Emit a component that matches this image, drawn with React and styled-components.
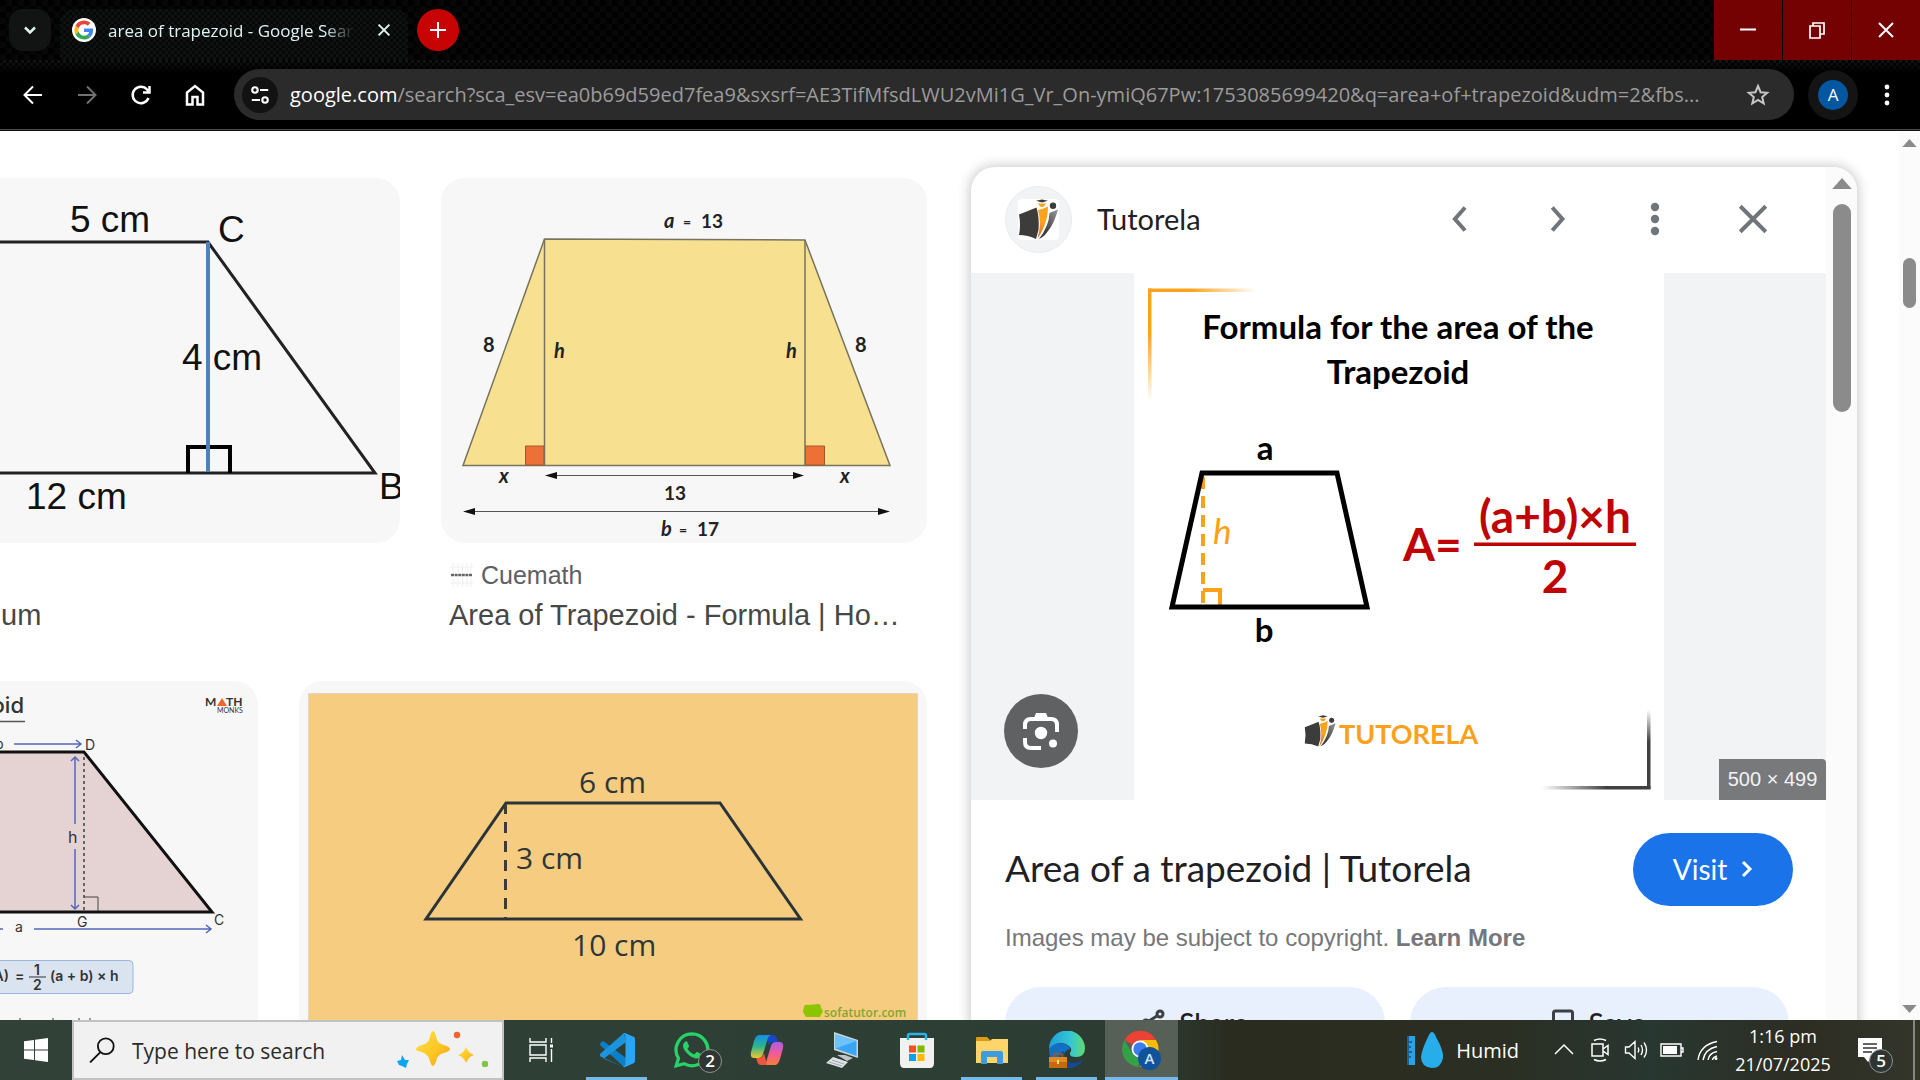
import React from 'react';
import styled, { createGlobalStyle } from 'styled-components';

const ui = '"Open Sans", "Noto Sans", sans-serif';
const arial = '"Liberation Sans", Arial, sans-serif';
const product = 'Lato, "Open Sans", sans-serif';

const Global = createGlobalStyle`
  * { box-sizing: border-box; }
  html, body { margin: 0; height: 100%; overflow: hidden; }
  #root { height: 100%; }
  button, input { font: inherit; color: inherit; border: 0; background: none; padding: 0; margin: 0; outline: 0; }
  a { color: inherit; text-decoration: none; }
  svg { display: block; flex: none; }
`;

const Screen = styled.div`
  height: 100vh;
  display: flex;
  flex-direction: column;
  background: #fff;
  font-family: ${ui};
`;

/* ---------- browser frame ---------- */
const Frame = styled.header`
  flex: none;
  color: #fff;
  background: #000;
  border-bottom: 1px solid #111;
`;
const TabStrip = styled.div`
  height: 60px;
  display: flex;
  align-items: flex-start;
  padding-left: 9px;
  background: repeating-conic-gradient(#070707 0 25%, #010101 0 50%) 0 0 / 12px 12px;
`;
const TabSearch = styled.button`
  width: 42px;
  height: 42px;
  margin: 9px 9px 0 0;
  display: grid;
  place-items: center;
  border-radius: 14px;
  background: #121313;
`;
const Tab = styled.div`
  width: 348px;
  height: 51px;
  margin-top: 9px;
  padding: 0 12px 10px 12px;
  display: flex;
  align-items: center;
  border-radius: 14px 14px 0 0;
  background: repeating-conic-gradient(#101212 0 25%, #060707 0 50%) 0 0 / 6px 6px;
`;
const TabTitle = styled.span`
  width: 252px;
  margin: 2px 18px 0 12px;
  font-size: 17px;
  line-height: 24px;
  white-space: nowrap;
  overflow: hidden;
  color: #dff3f1;
  mask-image: linear-gradient(90deg, #000 88%, transparent);
`;
const IconButton = styled.button`
  width: ${(p) => p.$size || 24}px;
  height: ${(p) => p.$size || 24}px;
  display: grid;
  place-items: center;
  flex: none;
`;
const NewTab = styled.button`
  width: 42px;
  height: 42px;
  margin: 9px auto 0 9px;
  display: grid;
  place-items: center;
  border-radius: 50%;
  background: #c80303;
`;
const WindowButtons = styled.div`
  display: flex;
  gap: 1px;
`;
const WindowButton = styled.button`
  width: 68px;
  height: 60px;
  display: grid;
  place-items: center;
  background: #740202;
`;
const Toolbar = styled.div`
  height: 70px;
  padding: 9px 20px 9px 6px;
  display: flex;
  align-items: center;
  border-bottom: 1px solid #4a4a4a;
  background:
    linear-gradient(180deg, transparent, #000 13px),
    repeating-conic-gradient(#151515 0 25%, #020202 0 50%) 0 0 / 6px 6px;
`;
const Omnibox = styled.div`
  flex: 1;
  min-width: 0;
  height: 51px;
  margin: 0 14px 0 12px;
  padding: 0 22px 0 8px;
  display: flex;
  align-items: center;
  border-radius: 26px;
  background: #2b2b2b;
  font-size: 20px;
`;
const SiteInfo = styled.button`
  width: 36px;
  height: 36px;
  margin-right: 12px;
  display: grid;
  place-items: center;
  border-radius: 50%;
  background: #121212;
  flex: none;
`;
const Host = styled.label`
  flex: none;
`;
const UrlInput = styled.input`
  flex: 1;
  min-width: 0;
  height: 36px;
  color: #9b9b9b !important;
  text-overflow: clip;
`;
const Profile = styled.button`
  width: 50px;
  height: 50px;
  margin-right: 16px;
  display: grid;
  place-items: center;
  border-radius: 50%;
  background: #141414;
`;
const Initial = styled.span`
  width: 30px;
  height: 30px;
  border-radius: 50%;
  background: #0357a0;
  font-size: 17px;
  line-height: 30px;
  text-align: center;
`;
const NavGroup = styled.nav`
  display: flex;
`;

/* ---------- page ---------- */
const Page = styled.main`
  flex: 1;
  min-height: 0;
  display: flex;
  overflow: hidden;
  background: #fff;
`;
const Results = styled.section`
  flex: 1;
  min-width: 0;
  padding-top: 47px;
  display: flex;
  flex-direction: column;
  gap: 48px;
`;
const Row = styled.div`
  display: flex;
  gap: 41px;
`;
const Card = styled.article`
  ${(p) => (p.$grow ? 'flex: 1;' : `width: ${p.$width}px;`)}
  min-width: 0;
`;
const Thumb = styled.a`
  display: block;
  height: 365px;
  overflow: hidden;
  background: #f7f7f7;
  border-radius: ${(p) => (p.$cut ? '0 24px 24px 0' : '24px')};
`;
const Source = styled.div`
  height: 28px;
  margin-top: 18px;
  padding-left: 9px;
  display: flex;
  align-items: center;
  gap: 8px;
  font: 25px/28px ${arial};
  color: #5e6063;
`;
const CardTitle = styled.h3`
  height: 36px;
  margin: 8px 0 0;
  padding: 0 ${(p) => (p.$cut ? 1 : 8)}px;
  font: 400 29px/36px ${arial};
  color: #474747;
  white-space: nowrap;
`;

const Panel = styled.aside`
  width: 886px;
  margin: 36px 42px 0 44px;
  display: flex;
  align-items: flex-start;
  height: 1000px;
  overflow: hidden;
  border-radius: 24px 24px 0 0;
  background: #fff;
  box-shadow: 0 0 12px 2px rgba(0, 0, 0, 0.2);
`;
const PanelBody = styled.div`
  flex: 1;
  min-width: 0;
`;
const PanelHead = styled.div`
  height: 106px;
  padding: 0 49px 2px 34px;
  display: flex;
  align-items: center;
  gap: 49px;
`;
const Brand = styled.a`
  flex: 1;
  display: flex;
  align-items: center;
  gap: 25px;
  font: 29px/36px ${product};
  color: #1f2024;
`;
const BrandMark = styled.span`
  width: 67px;
  height: 67px;
  display: grid;
  place-items: center;
  border: 1px solid #e8eaed;
  border-radius: 50%;
  background: #f1f3f4;
`;
const Stage = styled.div`
  position: relative;
  height: 527px;
  display: flex;
  justify-content: center;
  background: #f1f3f4;
`;
const LensButton = styled.button`
  position: absolute;
  left: 33px;
  bottom: 32px;
  width: 74px;
  height: 74px;
  display: grid;
  place-items: center;
  border-radius: 50%;
  background: #606163;
`;
const SizeBadge = styled.span`
  position: absolute;
  right: 0;
  bottom: 0;
  width: 107px;
  font: 20px/41px ${arial};
  text-align: center;
  color: #f1f3f4;
  background: #78797b;
  border-top-right-radius: 4px;
`;
const TitleRow = styled.div`
  margin-top: 33px;
  padding: 0 33px 0 34px;
  display: flex;
  align-items: center;
  justify-content: space-between;
`;
const PanelTitle = styled.h2`
  margin: 0;
  padding-bottom: 4px;
  font: 400 37px/48px ${product};
  color: #1f2024;
`;
const Visit = styled.a`
  width: 160px;
  height: 73px;
  padding-bottom: 2px;
  display: flex;
  align-items: center;
  justify-content: center;
  gap: 14px;
  border-radius: 37px;
  background: #1a73e8;
  color: #fff;
  font: 28px/36px ${product};
`;
const Notice = styled.p`
  margin: 18px 0 0;
  padding-left: 34px;
  font: 24px/28px ${arial};
  color: #75777b;
`;
const Actions = styled.div`
  margin-top: 35px;
  padding: 0 37px 0 34px;
  display: flex;
  gap: 25px;
`;
const Action = styled.button`
  flex: 1;
  height: 72px;
  display: flex;
  align-items: center;
  justify-content: center;
  gap: 14px;
  border-radius: 36px;
  background: #e8effd;
  color: #1f2024;
  font: 500 28px/36px ${product};
`;
const Track = styled.div`
  width: ${(p) => p.$width}px;
  height: 100%;
  padding: ${(p) => p.$pad};
  display: flex;
  flex-direction: column;
  align-items: center;
  background: #fbfbfb;
  flex: none;
`;
const ScrollThumb = styled.div`
  width: ${(p) => p.$width}px;
  height: ${(p) => p.$height}px;
  margin: ${(p) => p.$gap}px 0 auto;
  border-radius: 9px;
  background: #8b8b8b;
`;

/* ---------- taskbar ---------- */
const Taskbar = styled.footer`
  flex: none;
  height: 60px;
  display: flex;
  color: #fff;
  background: linear-gradient(90deg, #314137 0, #2d3e35 50%, #2b3b31 60%, #2b2c20 64%, #2b2e22 78%, #283731 86%, #2d2d22 94%, #34362b 100%);
`;
const TaskButton = styled.button`
  position: relative;
  width: ${(p) => p.$width || 75}px;
  height: 60px;
  display: grid;
  place-items: center;
  flex: none;
  &::before {
    content: '';
    position: absolute;
    inset: 0 1px;
    background: ${(p) => (p.$active ? '#566057' : 'transparent')};
  }
  &::after {
    content: '';
    position: absolute;
    bottom: 0;
    left: ${(p) => (p.$active ? 1 : 7)}px;
    right: ${(p) => (p.$active ? 1 : 7)}px;
    height: 3px;
    background: ${(p) => (p.$open || p.$active ? '#76b9ed' : 'transparent')};
  }
  svg { position: relative; }
`;
const NoticeButton = styled(TaskButton)`
  padding-right: 14px;
`;
const Count = styled.span`
  position: absolute;
  right: ${(p) => p.$right}px;
  bottom: 7px;
  width: 24px;
  height: 24px;
  border: 1px solid #8d938f;
  border-radius: 50%;
  background: #2f3531;
  font: 600 17px/22px ${ui};
  text-align: center;
`;
const SearchBox = styled.label`
  width: 432px;
  height: 60px;
  padding: 0 13px 0 15px;
  display: flex;
  align-items: center;
  gap: 17px;
  border: 2px solid #c2c2c2;
  background: #f1f1f1;
  color: #2b2b2b;
`;
const SearchInput = styled.input`
  flex: 1;
  min-width: 0;
  height: 40px;
  padding-top: 2px !important;
  font-size: 21px !important;
  &::placeholder { color: #2b2b2b; opacity: 1; }
`;
const Tray = styled.div`
  margin-left: auto;
  display: flex;
  align-items: center;
`;
const Weather = styled.button`
  display: flex;
  align-items: center;
  gap: 12px;
  margin-right: 27px;
  font-size: 20px;
`;
const TrayButton = styled.button`
  width: 36px;
  height: 60px;
  display: grid;
  place-items: center;
`;
const Clock = styled.time`
  width: 114px;
  font-size: 18px;
  line-height: 28px;
  text-align: center;
`;
const ShowDesktop = styled.button`
  width: 7px;
  height: 60px;
  border-left: 2px solid #85867f !important;
`;

/* ---------- drawings ---------- */
const Stroke = ({ w = 24, h, sw = 2, color = 'currentColor', children, vb, ...rest }) => (
  <svg width={w} height={h || w} viewBox={vb || '0 0 24 24'} fill="none" stroke={color} strokeWidth={sw} {...rest}>
    {children}
  </svg>
);

const TutorelaShapes = ({ id }) => (
  <>
    <defs>
      <linearGradient id={`${id}o`} x1="0" y1="0" x2="0" y2="1">
        <stop offset="0.5" stopColor="#fba31c" />
        <stop offset="1" stopColor="#f05a28" />
      </linearGradient>
      <linearGradient id={`${id}g`} x1="1" y1="0" x2="0" y2="1">
        <stop offset="0" stopColor="#999" />
        <stop offset="0.7" stopColor="#3c3c3b" />
      </linearGradient>
    </defs>
    <path d="M1 15.500Q10 12 18.500 8.500Q21.500 18 20.500 31L18 40Q10 36 1 36Q3 26 1 15.500Z" fill="#3c3c3b" />
    <path d="M20 11Q25 10 30 7.500Q30 17 27 25Q23 35 19.500 39.500Q24 25 20 11Z" fill={`url(#${id}o)`} />
    <path d="M31.500 14L40 10.500Q36 25 30 32Q26 38 21 40Q31 27 31.500 14Z" fill={`url(#${id}g)`} />
    <path d="M18 1.800L24 .4L30 1.800L24 3.500Z" fill="#3c3c3b" />
    <path d="M20.500 4Q24 5 27.500 4Q27 8 24 8Q21 8 20.500 4Z" fill="#fba31c" />
    <circle cx="35" cy="6.800" r="3.200" fill="#3c3c3b" />
  </>
);

const GoogleG = () => (
  <svg width="24" height="24" viewBox="0 0 24 24">
    <circle cx="12" cy="12" r="12" fill="#fff" />
    <g transform="translate(2.500 2.500) scale(.396)">
      <path fill="#EA4335" d="M24 9.500c3.540 0 6.710 1.220 9.210 3.600l6.850-6.850C35.900 2.380 30.470 0 24 0 14.620 0 6.510 5.380 2.560 13.220l7.980 6.190C12.430 13.720 17.740 9.500 24 9.500z" />
      <path fill="#4285F4" d="M46.980 24.550c0-1.570-.15-3.090-.38-4.550H24v9.020h12.940c-.58 2.960-2.260 5.480-4.780 7.180l7.730 6c4.510-4.180 7.090-10.360 7.090-17.650z" />
      <path fill="#FBBC05" d="M10.530 28.590c-.48-1.450-.76-2.990-.76-4.590s.27-3.140.76-4.590l-7.980-6.190C.92 16.460 0 20.120 0 24c0 3.880.92 7.540 2.560 10.780l7.970-6.190z" />
      <path fill="#34A853" d="M24 48c6.480 0 11.930-2.130 15.890-5.810l-7.730-6c-2.150 1.450-4.920 2.300-8.160 2.300-6.260 0-11.570-4.220-13.470-9.910l-7.980 6.190C6.510 42.620 14.620 48 24 48z" />
    </g>
  </svg>
);

const Trapezium = () => (
  <svg width="400" height="365" viewBox="0 178 400 365" fontFamily="Liberation Sans, Arial, sans-serif" fontSize="37" fill="#111">
    <path d="M0 242H208L375 473H0" fill="none" stroke="#222" strokeWidth="3" />
    <path d="M188 473V447H230V473" fill="none" stroke="#000" strokeWidth="4" />
    <path d="M208 242V472" stroke="#4f81bd" strokeWidth="4" />
    <text x="70" y="232">5 cm</text>
    <text x="218" y="242">C</text>
    <text x="182" y="370">4 cm</text>
    <text x="26" y="509">12 cm</text>
    <text x="379" y="499">B</text>
  </svg>
);

const Cuemath = () => (
  <svg width="486" height="365" viewBox="441 178 486 365" fontFamily="Lato, sans-serif" fontSize="20" fontWeight="700" fill="#222">
    <path d="M544.500 239L805 240L890 465.500H463Z" fill="#f7e090" stroke="#77735f" strokeWidth="1.500" />
    <path d="M525.500 465V446H544V465ZM805.500 465V446H824.500V465Z" fill="#ed7136" stroke="#a85626" />
    <path d="M544.500 239V465M805 240V465" stroke="#77735f" strokeWidth="1.500" />
    <path d="M550 475.500H800M470 511.500H884" stroke="#555" />
    <path d="M545 475.500L557 472V479ZM804 475.500L793 472V479ZM463 511.500L475 508V515ZM890 511.500L878 508V515Z" fill="#111" />
    <text x="664" y="228" fontStyle="italic">a</text>
    <text x="683" y="227" fontSize="14">=</text>
    <text x="701" y="228" fontSize="19">13</text>
    <text x="483" y="352">8</text>
    <text x="855" y="352">8</text>
    <text x="554" y="358" fontStyle="italic">h</text>
    <text x="786" y="358" fontStyle="italic">h</text>
    <text x="499" y="483" fontStyle="italic">x</text>
    <text x="840" y="483" fontStyle="italic">x</text>
    <text x="664" y="500" fontSize="19">13</text>
    <text x="661" y="536" fontStyle="italic">b</text>
    <text x="679" y="535" fontSize="14">=</text>
    <text x="697" y="536" fontSize="19">17</text>
  </svg>
);

const MathMonks = () => (
  <svg width="258" height="365" viewBox="0 681 258 365" fontFamily="Lato, sans-serif" fill="#333">
    <text x="24" y="713" fontSize="22" fontFamily="Inter, sans-serif" fontWeight="500" textAnchor="end">oid</text>
    <path d="M0 721.500H25" stroke="#555" strokeWidth="1.500" />
    <g fontSize="12" fontWeight="700">
      <text x="205" y="706">M</text>
      <text x="226" y="706">TH</text>
      <text x="217" y="713" fontSize="7" fontWeight="400">MONKS</text>
    </g>
    <path d="M217 706L222 698L227 706Z" fill="#ee6430" />
    <path d="M0 752H84L212 912H0Z" fill="#e5d2d3" />
    <path d="M0 752H84L212 912H0" fill="none" stroke="#111" strokeWidth="3" />
    <path d="M84 757V911" stroke="#666" strokeWidth="2" strokeDasharray="3 3" />
    <path d="M84 897H98V911" fill="none" stroke="#444" />
    <g stroke="#5468b8" fill="none" strokeWidth="1.500">
      <path d="M14 744H81M76 740L81 744L76 748" />
      <path d="M34 929H211M206 925L211 929L206 933M0 929H3" />
      <path d="M75 757V824M75 849V909M71 761L75 757L79 761M71 905L75 909L79 905" />
    </g>
    <g fontFamily="Inter, sans-serif" fontSize="14">
      <text x="-5" y="749">b</text>
      <text x="85" y="750">D</text>
      <text x="68" y="843" fontSize="16">h</text>
      <text x="77" y="927">G</text>
      <text x="214" y="925">C</text>
      <text x="15" y="932">a</text>
    </g>
    <rect x="-8" y="960.500" width="141" height="33" rx="4" fill="#dae3f0" stroke="#9eb5dd" />
    <g fontSize="14" fontWeight="600" fontFamily="Inter, sans-serif">
      <text x="9" y="981" textAnchor="end">A)</text>
      <text x="15" y="981">=</text>
      <text x="34" y="975">1</text>
      <text x="33" y="990">2</text>
      <path d="M29 977H46" stroke="#333" />
      <text x="50" y="981">(a + b) × h</text>
    </g>
    <path d="M20 1018V1022M53 1018V1022M79 1018V1022M90 1018V1022" stroke="#999" strokeWidth="2" />
  </svg>
);

const Sofatutor = () => (
  <svg width="628" height="365" viewBox="299 681 628 365" fontFamily="Open Sans, sans-serif" fontSize="30" fill="#2f3638">
    <path d="M308.500 693.500H917.500V1050H308.500Z" fill="#f6cd80" stroke="#e4d6bd" />
    <path d="M506 803H720L800.500 919H426Z" fill="none" stroke="#2a3439" strokeWidth="3" />
    <path d="M505.500 805V919" stroke="#3a3d36" strokeWidth="3" strokeDasharray="11 8" strokeDashoffset="2" />
    <text x="579" y="793">6 cm</text>
    <text x="516" y="869">3 cm</text>
    <text x="572" y="956">10 cm</text>
    <path d="M804 1007Q804 1004 808 1005L818 1004Q821 1004 821 1008L823 1011L820 1017H806L803 1012Z" fill="#8cc400" />
    <text x="824" y="1017" fontSize="12" fontWeight="600" fill="#83a52d">sofatutor.com</text>
  </svg>
);

const FormulaPicture = () => (
  <svg width="530" height="527" viewBox="1134 273 530 527" fontFamily="Lato, sans-serif" fontWeight="700">
    <defs>
      <linearGradient id="oh"><stop stopColor="#fba31c" offset=".4" /><stop offset="1" stopColor="#fba31c" stopOpacity="0" /></linearGradient>
      <linearGradient id="ov" x2="0" y2="1"><stop stopColor="#fba31c" offset=".4" /><stop offset="1" stopColor="#fba31c" stopOpacity="0" /></linearGradient>
      <linearGradient id="dh"><stop stopColor="#404040" stopOpacity="0" /><stop offset=".6" stopColor="#404040" /></linearGradient>
      <linearGradient id="dv" x2="0" y2="1"><stop stopColor="#404040" stopOpacity="0" /><stop offset=".4" stopColor="#404040" /></linearGradient>
    </defs>
    <path fill="#fff" d="M1134 273H1664V800H1134Z" />
    <path fill="url(#oh)" d="M1148 288.500H1256V292H1148Z" />
    <path fill="url(#ov)" d="M1148 288.500H1151.500V402H1148Z" />
    <path fill="url(#dh)" d="M1542 786H1650.500V789.500H1542Z" />
    <path fill="url(#dv)" d="M1647 710H1650.500V789H1647Z" />
    <g textAnchor="middle" fontSize="33">
      <text x="1398" y="339">Formula for the area of the</text>
      <text x="1398" y="384">Trapezoid</text>
      <text x="1265" y="460">a</text>
      <text x="1264" y="642">b</text>
    </g>
    <path d="M1203 477V604" stroke="#f9a11b" strokeWidth="4" strokeDasharray="12 7" />
    <path d="M1203 590H1220V606" fill="none" stroke="#f9a11b" strokeWidth="4" />
    <path d="M1202 473H1337L1367 607H1172Z" fill="none" stroke="#000" strokeWidth="5" />
    <text x="1213" y="544" fontSize="35" fontStyle="italic" fontWeight="400" fill="#f9a11b">h</text>
    <g fill="#be0404" fontSize="46">
      <text x="1403" y="561">A=</text>
      <text x="1555" y="533" textAnchor="middle">(a+b)×h</text>
      <path d="M1474 542.500H1636V546H1474Z" />
      <text x="1555" y="593" textAnchor="middle">2</text>
    </g>
    <text x="1339" y="744" fontSize="27" fill="#f9a11b">TUTORELA</text>
    <g transform="translate(1304 715) scale(.79)"><TutorelaShapes id="pic" /></g>
  </svg>
);

const Sparkles = () => (
  <svg width="92" height="44" viewBox="397 1028 92 44">
    <defs><linearGradient id="yel" x2="1" y2="1"><stop stopColor="#ffe14a" /><stop offset=".6" stopColor="#fbc420" /><stop offset="1" stopColor="#ef9a22" /></linearGradient></defs>
    <path d="M433 1031Q435 1031 437 1040Q439 1044 444 1045Q450 1047 450 1049Q450 1051 444 1053Q439 1054 437 1058Q435 1066 433 1066Q431 1066 429 1058Q427 1054 422 1052Q416 1051 416 1049Q416 1047 422 1045Q427 1044 429 1040Q431 1031 433 1031Z" fill="url(#yel)" />
    <path d="M466 1047Q468 1053 474 1055Q468 1057 466 1063Q464 1057 458 1055Q464 1053 466 1047Z" fill="url(#yel)" />
    <path d="M402 1055L405 1060L409 1060L407 1064L406 1068L402 1066L399 1065L397 1061L401 1060Z" fill="#0aa5ee" />
    <circle cx="457" cy="1035" r="3.200" fill="#f2622b" />
    <circle cx="485" cy="1064" r="3.200" fill="#83c441" />
  </svg>
);

const VsCode = () => (
  <svg width="36" height="36" viewBox="0 0 36 36">
    <path d="M25 1L35 5V31L25 35L1.500 13.500Q0 12 1.500 11L3 9.500Q4 9 5 9.500L27 26V10Z" fill="#0d7fc8" />
    <path d="M25 35L1.500 24.500Q0 23 1.500 21.500L25 1L27 10L5 26.500Q4 27 3 26Z" fill="#1a94dc" />
    <path d="M26 1L35 5Q36 5.500 36 7V29Q36 30.500 35 31L26 35Q24.500 35.500 24 34Q26 35 26.500 32V4Q26 1 24 2Q25 .5 26 1Z" fill="#2aa5f2" />
  </svg>
);
const WhatsApp = () => (
  <svg width="36" height="36" viewBox="0 0 24 24" fill="#25d366">
    <path d="M17.472 14.382c-.297-.149-1.758-.867-2.030-.967-.273-.099-.471-.148-.67.150-.197.297-.767.966-.94 1.164-.173.199-.347.223-.644.075-.297-.150-1.255-.463-2.390-1.475-.883-.788-1.480-1.761-1.653-2.059-.173-.297-.018-.458.130-.606.134-.133.298-.347.446-.520.149-.174.198-.298.298-.497.099-.198.050-.371-.025-.520-.075-.149-.669-1.612-.916-2.207-.242-.579-.487-.500-.669-.510-.173-.008-.371-.010-.570-.010-.198 0-.520.074-.792.372-.272.297-1.040 1.016-1.040 2.479 0 1.462 1.065 2.875 1.213 3.074.149.198 2.096 3.200 5.077 4.487.709.306 1.262.489 1.694.625.712.227 1.360.195 1.871.118.571-.085 1.758-.719 2.006-1.413.248-.694.248-1.289.173-1.413-.074-.124-.272-.198-.570-.347" />
    <path d="M12 1.300A10.600 10.600 0 0 0 3 17.500L1.500 22.500L6.700 21.100A10.600 10.600 0 1 0 12 1.300Z" fill="none" stroke="#25d366" strokeWidth="2.200" />
  </svg>
);
const Copilot = () => (
  <svg width="34" height="34" viewBox="0 0 34 34">
    <defs>
      <linearGradient id="cpa" x2="0" y2="1"><stop stopColor="#168fe8" /><stop offset=".5" stopColor="#2db58c" /><stop offset="1" stopColor="#f4c72b" /></linearGradient>
      <linearGradient id="cpb" x2="0" y2="1"><stop stopColor="#ad5be8" /><stop offset=".5" stopColor="#ef5c9b" /><stop offset="1" stopColor="#fa7b34" /></linearGradient>
    </defs>
    <path d="M17 2H23Q26 2 27 6L28 9H22Q20 9 19 13Z" fill="#1647c7" />
    <path d="M9 2H21Q18 3 17 8L13 21Q12 25 8 25H4Q0 25 1 19L4 8Q6 2 9 2Z" fill="url(#cpa)" />
    <path d="M25 32H13Q16 31 17 26L21 13Q22 9 26 9H30Q34 9 33 15L30 26Q28 32 25 32Z" fill="url(#cpb)" />
    <path d="M17 32H11Q8 32 7 28L6 25H9Q13 25 14 20Z" fill="#f2543d" />
  </svg>
);
const Computer = () => (
  <svg width="34" height="38" viewBox="0 0 34 38">
    <path d="M9 1L33 9V27L9 19Z" fill="#c9d3dc" />
    <path d="M10.500 3.500L31.500 10V25L10.500 17.500Z" fill="#3aa5f2" />
    <path d="M10.500 3.500L31.500 10L10.500 17.500Z" fill="#6cc3fa" />
    <path d="M1 32L8 26L23 31L17 37Z" fill="#dfe3e6" /><path d="M12 24L20 24L28 27L22 30Z" fill="#bfc5ca" />
    <path d="M4 31L17 35M7 29L19 33" stroke="#8f989f" strokeWidth=".8" />
  </svg>
);
const Store = () => (
  <svg width="36" height="36" viewBox="0 0 36 36">
    <path d="M9 9V3.500Q9 2 11 2H25Q27 2 27 3.500V9" fill="none" stroke="#28b4ea" strokeWidth="2.500" />
    <path d="M1 6H35V31Q35 36 31 36H5Q1 36 1 31Z" fill="#f1f1f1" />
    <path d="M9 6V8M27 6V8" stroke="#28b4ea" strokeWidth="2.500" />
    <path d="M10 13.500H17V20.500H10Z" fill="#f05022" /><path d="M18.500 13.500H25.500V20.500H18.500Z" fill="#7fb900" />
    <path d="M10 22H17V29H10Z" fill="#02a4ef" /><path d="M18.500 22H25.500V29H18.500Z" fill="#ffb901" />
  </svg>
);
const Folder = () => (
  <svg width="34" height="34" viewBox="0 0 34 34">
    <path d="M1 5Q1 4 2 4H12L16 8H1Z" fill="#dc9c12" /><path d="M1 8H15L17 6H33V30H1Z" fill="#fdd56a" />
    <path d="M6 31V20Q6 18 8 18H26Q28 18 28 20V31H22V24H12V31Z" fill="#3d9be0" />
  </svg>
);
const Edge = () => (
  <svg width="38" height="38" viewBox="0 0 38 38">
    <defs><linearGradient id="ed"><stop stopColor="#1f9ed8" /><stop offset=".6" stopColor="#36c5d6" /><stop offset="1" stopColor="#5fdd6b" /></linearGradient></defs>
    <path d="M1 18A18 18 0 0 1 37 17Q37 26 28 26Q21 26 22 22Q25 18 21 15Q12 8 1 18Z" fill="url(#ed)" />
    <path d="M1 18Q7 10 17 13Q22 15 22 18Q14 20 17 28Q21 34 32 32Q26 38 18 37Q1 35 1 18Z" fill="#116fc5" />
    <path d="M16 20Q14 31 24 32Q30 32 36 28Q30 37 20 37Q9 35 11 26Q12 21 16 20Z" fill="#12499b" />
    <path d="M1 26H19V37H1Z" fill="#c46a10" /><path d="M1 26H19V31H1Z" fill="#e28c1c" /><path d="M6 26V23H14V26" fill="none" stroke="#a95a0c" strokeWidth="1.500" /><path d="M9 29H11V33H9Z" fill="#ffe27a" />
  </svg>
);
const Chrome = () => (
  <svg width="40" height="42" viewBox="1 0 40 42">
    <path d="M19 20L3.500 11A18 18 0 0 1 35 11Z" fill="#ea4335" />
    <path d="M19 11H35A18 18 0 0 1 19 38L27 24Z" fill="#fbbc05" />
    <path d="M3.500 11L11 24L21 29L17 38A18 18 0 0 1 3.500 11Z" fill="#34a047" />
    <circle cx="19" cy="20" r="8.500" fill="#fff" /><circle cx="19" cy="20" r="6.700" fill="#3b7ded" />
    <circle cx="28.500" cy="29.500" r="11.500" fill="#10539b" />
    <text x="28.500" y="35" fontSize="15" fontFamily="Open Sans, sans-serif" fontWeight="600" fill="#cfe0f2" textAnchor="middle">A</text>
  </svg>
);

const NAV = [
  ['Back', <Stroke key="b"><path d="M21 12H4M12 3.500L3.500 12L12 20.500" /></Stroke>],
  ['Forward', <Stroke key="f" color="#717171"><path d="M3 12H20M12 3.500L20.500 12L12 20.500" /></Stroke>],
  ['Reload', <Stroke key="r" sw={2.5}><path d="M19.500 15A8.200 8.200 0 1 1 18 6.500L20.500 9.500M20.500 3V9.500H14" /></Stroke>],
  ['Home', <Stroke key="h" sw={2.5}><path d="M4 21.500V9.500L12 3L20 9.500V21.500H14.500V14H9.500V21.500Z" /></Stroke>],
];
const HEAD_ICONS = [
  ['Previous image', <Stroke key="p" w={36} color="#70757a" sw={3}><path d="M16.500 3.500L9 12L16.500 20.500" transform="translate(1.200 1.200) scale(.9)" /></Stroke>],
  ['Next image', <Stroke key="n" w={36} color="#70757a" sw={3}><path d="M8.500 3.500L16 12L8.500 20.500" transform="translate(1.200 1.200) scale(.9)" /></Stroke>],
  ['More options', <svg key="m" width="36" height="36" fill="#70757a"><circle cx="18" cy="6" r="4.200" /><circle cx="18" cy="18" r="4.200" /><circle cx="18" cy="30" r="4.200" /></svg>],
  ['Close', <Stroke key="c" w={36} color="#70757a" sw={2.6}><path d="M3.500 3.500L20.500 20.500M20.500 3.500L3.500 20.500" /></Stroke>],
];
const APPS = [
  ['Visual Studio Code', VsCode, { $open: true }],
  ['WhatsApp', WhatsApp, {}, 2],
  ['Copilot', Copilot, {}],
  ['This PC', Computer, {}],
  ['Microsoft Store', Store, {}],
  ['File Explorer', Folder, { $open: true }],
  ['Microsoft Edge', Edge, { $open: true }],
  ['Google Chrome', Chrome, { $active: true }],
];
const TRAY = [
  ['Show hidden icons', <Stroke key="1" sw={1.5}><path d="M3 16L12 7L21 16" /></Stroke>],
  ['Meet now', <Stroke key="2" sw={1.5}><path d="M4 6H15V18H4ZM15 11L20 7.500V16.500L15 13M6 2.500Q12 -.5 18 2.500M6 21.500Q12 24.500 18 21.500" /></Stroke>],
  ['Volume', <Stroke key="3" sw={1.4}><path d="M1.500 9V15H5L11 20.500V3.500L5 9ZM14 9.500Q15.500 12 14 14.500M17 7Q20 12 17 17M20 4.500Q25 12 20 19.500" /></Stroke>],
  ['Battery', <svg key="4" width="24" height="24"><path d="M1 6H21V18H1ZM21 10H23V14H21" fill="none" stroke="#fff" strokeWidth="1.400" /><path d="M3 8H17V16H3Z" fill="#fff" /></svg>],
  ['Network', <Stroke key="5" sw={1.4}><path d="M2 22Q4 7 21 3.500M7 22Q9 11 21 8.500M12 22Q13 15 21 13.500M16.500 22Q17 19 21 18" /><circle cx="20" cy="20.500" r="1.500" fill="#fff" stroke="none" /></Stroke>],
];
const Arrow = ({ down, w = 16, h = 9 }) => (
  <svg width={w} height={h} viewBox="0 0 16 9" fill="#8b8b8b"><path d={down ? 'M0 0H16L8 9Z' : 'M0 9L8 0L16 9Z'} /></svg>
);

export default function App() {
  return (
    <Screen>
      <Global />
      <Frame>
        <TabStrip>
          <TabSearch aria-label="Search tabs"><Stroke w={20} sw={3} color="#dff3f1"><path d="M6 9L12 15L18 9" /></Stroke></TabSearch>
          <Tab>
            <GoogleG />
            <TabTitle>area of trapezoid - Google Search</TabTitle>
            <IconButton aria-label="Close tab"><Stroke w={20} sw={2.4} color="#dff3f1"><path d="M5.500 5.500L18.500 18.500M18.500 5.500L5.500 18.500" /></Stroke></IconButton>
          </Tab>
          <NewTab aria-label="New tab"><Stroke><path d="M12 4V20M4 12H20" /></Stroke></NewTab>
          <WindowButtons>
            <WindowButton aria-label="Minimize"><Stroke w={18} vb="0 0 18 18"><path d="M1 8.500H17" /></Stroke></WindowButton>
            <WindowButton aria-label="Restore"><Stroke w={18} vb="0 0 18 18" sw={1.7}><path d="M2 5H12V17H2ZM5 5V2H16V13H12" /></Stroke></WindowButton>
            <WindowButton aria-label="Close"><Stroke w={18} vb="0 0 18 18"><path d="M2 2L16 16M16 2L2 16" /></Stroke></WindowButton>
          </WindowButtons>
        </TabStrip>
        <Toolbar>
          <NavGroup>
            {NAV.map(([label, icon]) => <IconButton key={label} $size={54} aria-label={label}>{icon}</IconButton>)}
          </NavGroup>
          <Omnibox>
            <SiteInfo aria-label="View site information">
              <Stroke w={22} sw={2.3}><circle cx="6.500" cy="6.500" r="3" /><path d="M12 6.500H21M3 17.500H12" /><circle cx="17.500" cy="17.500" r="3" /></Stroke>
            </SiteInfo>
            <Host htmlFor="url">google.com</Host>
            <UrlInput id="url" readOnly value="/search?sca_esv=ea0b69d59ed7fea9&sxsrf=AE3TifMfsdLWU2vMi1G_Vr_On-ymiQ67Pw:1753085699420&q=area+of+trapezoid&udm=2&fbs..." />
            <IconButton aria-label="Bookmark this tab" $size={28}>
              <Stroke color="#c7c7c7"><path d="M12 3L14.600 9.200L21.200 9.700L16.200 14L17.700 20.500L12 17L6.300 20.500L7.800 14L2.800 9.700L9.400 9.200Z" /></Stroke>
            </IconButton>
          </Omnibox>
          <Profile aria-label="Profile"><Initial>A</Initial></Profile>
          <IconButton aria-label="Menu" $size={26}>
            <svg width="26" height="26" fill="#fff"><circle cx="13" cy="5" r="2.400" /><circle cx="13" cy="13" r="2.400" /><circle cx="13" cy="21" r="2.400" /></svg>
          </IconButton>
        </Toolbar>
      </Frame>

      <Page>
        <Results>
          <Row>
            <Card $width={400}>
              <Thumb href="#trapezium" $cut><Trapezium /></Thumb>
              <Source />
              <CardTitle $cut>um</CardTitle>
            </Card>
            <Card $grow>
              <Thumb href="#cuemath"><Cuemath /></Thumb>
              <Source>
                <svg width="23" height="24"><path d="M3 0V24M8 0V24M12.500 0V24M17 0V24M21 0V24M0 4H23M0 20H23" stroke="#efefef" /><path d="M0 9H23V15H0Z" fill="#fff" /><path d="M1 12H22" stroke="#666" strokeWidth="2.500" strokeDasharray="3 .6" /></svg>
                Cuemath
              </Source>
              <CardTitle>Area of Trapezoid - Formula | Ho…</CardTitle>
            </Card>
          </Row>
          <Row>
            <Card $width={258}><Thumb href="#mathmonks" $cut><MathMonks /></Thumb></Card>
            <Card $grow><Thumb href="#sofatutor"><Sofatutor /></Thumb></Card>
          </Row>
        </Results>

        <Panel>
          <PanelBody>
            <PanelHead>
              <Brand href="#tutorela">
                <BrandMark>
                  <svg width="41" height="41" viewBox="0 0 41 41"><rect width="41" height="41" rx="4" fill="#fff" /><TutorelaShapes id="head" /></svg>
                </BrandMark>
                Tutorela
              </Brand>
              {HEAD_ICONS.map(([label, icon]) => <IconButton key={label} $size={49} aria-label={label}>{icon}</IconButton>)}
            </PanelHead>
            <Stage>
              <FormulaPicture />
              <LensButton aria-label="Search inside image">
                <svg width="38" height="38" viewBox="0 0 38 38" fill="none" stroke="#fff" strokeWidth="4">
                  <path d="M3 17V13Q3 7 9 7H29Q35 7 35 13V20M3 26V30Q3 36 9 36H19" />
                  <path d="M12 6L14 1H24L26 6Z" fill="#fff" stroke="none" />
                  <circle cx="19" cy="21" r="6.200" fill="#fff" stroke="none" /><circle cx="31" cy="31.500" r="4" fill="#fff" stroke="none" />
                </svg>
              </LensButton>
              <SizeBadge>500 × 499</SizeBadge>
            </Stage>
            <TitleRow>
              <PanelTitle>Area of a trapezoid | Tutorela</PanelTitle>
              <Visit href="#visit">Visit<Stroke w={12} h={18} vb="0 0 12 18" sw={3}><path d="M2 2L9 9L2 16" /></Stroke></Visit>
            </TitleRow>
            <Notice>Images may be subject to copyright. <a href="#learn"><b>Learn More</b></a></Notice>
            <Actions>
              <Action>
                <svg width="24" height="28" viewBox="0 0 24 28" fill="none" stroke="#3c4043" strokeWidth="3"><path d="M5 14L19 5M5 14L19 23" /><circle cx="19" cy="5" r="3" fill="#e8effd" /><circle cx="5" cy="14" r="3" /><circle cx="19" cy="23" r="3" /></svg>
                Share
              </Action>
              <Action>
                <svg width="22" height="28" viewBox="0 0 22 28" fill="none" stroke="#3c4043" strokeWidth="3"><path d="M1.500 26V4Q1.500 2 3.500 2H18.500Q20.500 2 20.500 4V26L11 22Z" /></svg>
                Save
              </Action>
            </Actions>
          </PanelBody>
          <Track $width={31} $pad="11px 0 0">
            <Arrow w={20} h={11} />
            <ScrollThumb $width={18} $height={208} $gap={15} />
          </Track>
        </Panel>
        <Track $width={21} $pad="8px 0 7px">
          <Arrow w={15} h={8} />
          <ScrollThumb $width={13} $height={50} $gap={111} />
          <Arrow w={15} h={8} down />
        </Track>
      </Page>

      <Taskbar>
        <TaskButton $width={72} aria-label="Start">
          <svg width="24" height="24" fill="#fff"><path d="M0 3.300L10 2V11.500H0ZM11 1.800L24 0V11.500H11ZM0 12.500H10V22L0 20.700ZM11 12.500H24V24L11 22.200Z" /></svg>
        </TaskButton>
        <SearchBox>
          <Stroke w={26} sw={1.7} color="#111"><circle cx="15.500" cy="8.500" r="7.300" /><path d="M10.500 14L1 23.500" /></Stroke>
          <SearchInput placeholder="Type here to search" aria-label="Type here to search" />
          <Sparkles />
        </SearchBox>
        <TaskButton aria-label="Task view">
          <Stroke w={26} sw={1.4} vb="0 0 26 26"><path d="M1 1V5H17V1M1 25V21H17V25M1 8H17V18H1ZM22.500 1V6M22.500 12V25" /><path d="M21 7.500H24V10.500H21Z" fill="#fff" stroke="none" /></Stroke>
        </TaskButton>
        {APPS.map(([label, Icon, state, count]) => (
          <TaskButton key={label} aria-label={label} {...state}>
            <Icon />
            {count ? <Count $right={7}>{count}</Count> : null}
          </TaskButton>
        ))}
        <Tray>
          <Weather>
            <svg width="37" height="38" viewBox="0 0 37 38">
              <path d="M0 5H8V34H0Z" fill="#28a3e8" /><path d="M0 5H2V34H0Z" fill="#14639f" /><path d="M2 11H5M2 16H4M2 21H5M2 26H4" stroke="#0f5288" strokeWidth="1.500" />
              <path d="M25 1Q27 1 29 6Q37 20 36 27Q34 37 25 37Q14 36 14 26Q15 18 21 6Q23 1 25 1Z" fill="#27aeea" />
            </svg>
            Humid
          </Weather>
          {TRAY.map(([label, icon]) => <TrayButton key={label} aria-label={label}>{icon}</TrayButton>)}
          <Clock>1:16 pm<br />21/07/2025</Clock>
          <NoticeButton $width={73} aria-label="Notifications">
            <svg width="24" height="26" viewBox="0 0 24 26"><path d="M0 1H24V20H14L10 25L6 20H0Z" fill="#fff" /><path d="M5 7H19M5 11H19M5 15H14" stroke="#333" strokeWidth="1.300" /></svg>
            <Count $right={20}>5</Count>
          </NoticeButton>
          <ShowDesktop aria-label="Show desktop" />
        </Tray>
      </Taskbar>
    </Screen>
  );
}
